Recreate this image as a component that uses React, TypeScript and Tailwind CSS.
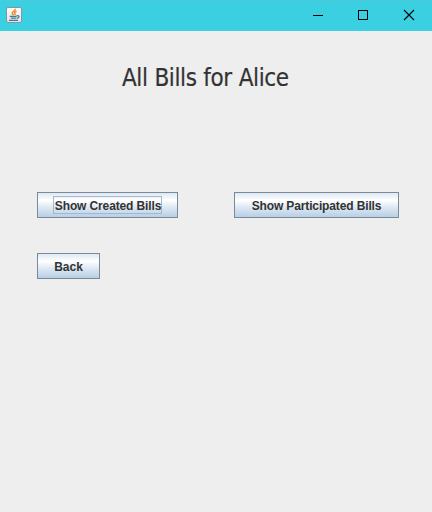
import React from 'react';

function JavaIcon() {
  return (
    <svg width="16" height="16" viewBox="0 0 16 16" className="mt-[7px] ml-[6px] block">
      <defs>
        <linearGradient id="tile" x1="0" y1="0" x2="0" y2="1">
          <stop offset="0" stopColor="#ffffff" />
          <stop offset="1" stopColor="#dde1e4" />
        </linearGradient>
      </defs>
      <rect x="0.5" y="0.5" width="15" height="15" rx="1.5" fill="url(#tile)" stroke="#8298a0" />
      <path d="M9.3 1.8c.6 1.8-3.6 2.6-3.1 4.5.2.8 1 1.2 1.2 2M10.5 4.2c-1.7.6-2.4 1.3-1.7 2.2.4.5.2 1-.2 1.6" fill="none" stroke="#f08a28" strokeWidth="1.5" />
      <path d="M3.6 9.3h7M4.8 11.2h5.6M3 13.4h9" fill="none" stroke="#4d7596" strokeWidth="1.2" />
      <path d="M10.6 8.9c3.2-.9 3.2 1.9.3 2.5" fill="none" stroke="#4d7596" strokeWidth="1.2" />
    </svg>
  );
}

function TitleBar() {
  return (
    <header className="flex h-[31px] justify-between border-t border-[#4cc9da] bg-[#3acfe1]">
      <div className="-mt-px"><JavaIcon /></div>
      <div className="-mt-px flex" aria-hidden="true">
        <svg width="45" height="31" className="block" shapeRendering="crispEdges">
          <path d="M17 15.5h10" stroke="#000" />
        </svg>
        <svg width="45" height="31" className="block" shapeRendering="crispEdges">
          <rect x="17.5" y="10.5" width="9" height="9" fill="none" stroke="#000" />
        </svg>
        <svg width="46" height="31" className="block">
          <path d="M18 10l10 10M28 10L18 20" stroke="#000" strokeWidth="1.1" />
        </svg>
      </div>
    </header>
  );
}

type ButtonProps = { label: string; width: string; spacing: string; focused?: boolean };

function MetalButton({ label, width, spacing, focused }: ButtonProps) {
  return (
    <button
      className={`${width} flex h-[26px] items-center justify-center border border-[#7a8a99] bg-[linear-gradient(to_bottom,#dde8f3_0%,#ffffff_30%,#dde8f3_60%,#b8cfe5_100%)] font-['Liberation_Sans',Arial,sans-serif] text-[12px] leading-[16px] font-bold text-[#333333]`}
    >
      <span className={`flex h-[18px] items-center justify-center border pt-[2px] ${focused ? 'w-[109px] border-[#a3b8cc] pl-px' : 'border-transparent'}`}>
        <span className={`${spacing} whitespace-nowrap`}>{label}</span>
      </span>
    </button>
  );
}

export default function App() {
  return (
    <div className="h-[512px] w-[432px] overflow-hidden bg-[#eeeeee]">
      <TitleBar />
      <main className="pl-[37px]">
        <h1 className="mt-[32px] ml-[85px] h-[30px] font-['DejaVu_Sans_Condensed','DejaVu_Sans',sans-serif] text-[24px] leading-[30px] font-normal whitespace-nowrap text-[#333333] [font-stretch:condensed] tracking-[-0.4px] [word-spacing:0.4px] [-webkit-text-stroke:0.2px_#333333]">
          All Bills for Alice
        </h1>
        <div className="mt-[99px] flex gap-[56px]">
          <MetalButton label="Show Created Bills" width="w-[141px]" spacing="tracking-[-0.13px]" focused />
          <MetalButton label="Show Participated Bills" width="w-[165px]" spacing="tracking-[-0.13px]" />
        </div>
        <div className="mt-[35px]">
          <MetalButton label="Back" width="w-[63px]" spacing="tracking-normal" />
        </div>
      </main>
    </div>
  );
}
